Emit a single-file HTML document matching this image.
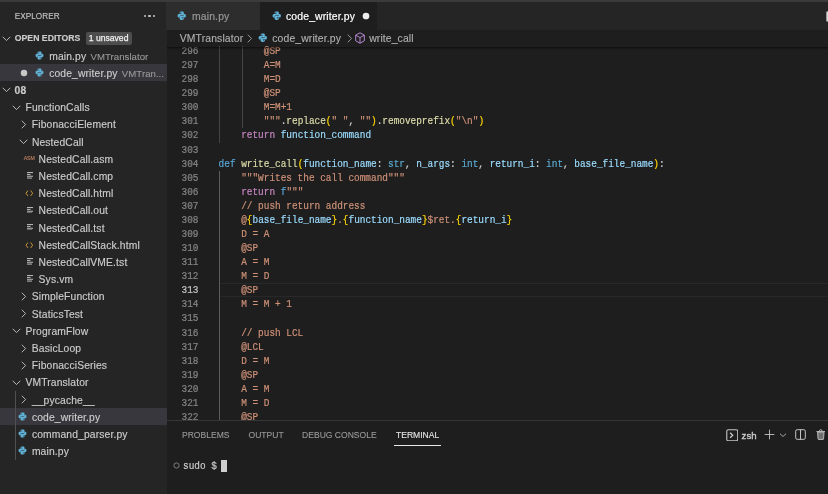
<!DOCTYPE html><html><head><meta charset="utf-8"><style>
*{margin:0;padding:0;box-sizing:border-box}
html,body{width:828px;height:494px;overflow:hidden;background:#1e1e1e}
body{position:relative;font-family:'Liberation Sans', sans-serif}
#root{position:absolute;left:0;top:0;width:828px;height:494px;will-change:transform}
#top{position:absolute;left:0;top:0;width:828px;height:2.4px;background:#3b3b3b;z-index:5}
#sb{position:absolute;left:0;top:0;width:166.5px;height:494px;background:#252526}
#tabs{position:absolute;left:166.5px;top:0;width:661.5px;height:30px;background:#252526}
#bc{position:absolute;left:166.5px;top:30px;width:661.5px;height:16px;background:#1e1e1e}
#bc>*{}
.t{position:absolute;white-space:pre;font-family:'Liberation Sans', sans-serif}
.hdr{font-size:8.2px;letter-spacing:0.05px;color:#c4c4c4;line-height:10px;-webkit-text-stroke:0.12px currentColor}
.hdrb{font-size:8.7px;font-weight:bold;color:#cccccc;line-height:17.2px;-webkit-text-stroke:0.15px currentColor}
.row{font-size:10.3px;letter-spacing:0.14px;color:#cccccc;line-height:17.2px;height:17.2px;padding-top:0.5px;-webkit-text-stroke:0.15px currentColor}
.desc{-webkit-text-stroke:0.1px currentColor}
.row.b{font-weight:bold}
.desc{color:#9a9a9a;font-size:9.6px;letter-spacing:0.05px;margin-left:1.3px}
.badge{position:absolute;background:#4d4d4d;border-radius:2px;color:#f0f0f0;font-size:8.6px;line-height:13px;text-align:center;font-family:'Liberation Sans', sans-serif;letter-spacing:0px;-webkit-text-stroke:0.25px currentColor}
.sel{position:absolute;left:0;width:166.5px;height:17.2px;background:#37373d}
.dot{position:absolute;width:7.2px;height:7.2px;border-radius:50%;background:#d0d0d0}
.dots{position:absolute;display:flex;gap:2.2px}
.dots i{display:block;width:2.3px;height:2.3px;border-radius:50%;background:#c5c5c5}
.asm{position:absolute;font-size:5.2px;color:#c08060;-webkit-text-stroke:0.12px currentColor;font-family:'Liberation Sans', sans-serif;letter-spacing:-0.1px;line-height:5px}
.lines{position:absolute;width:7px}
.lines i{display:block;height:1.1px;background:#c8c8c8;margin-bottom:0.9px}
.tab{position:absolute;top:2.2px;height:27.8px}
.tabt{top:3.2px;line-height:27.8px;font-size:10.4px;letter-spacing:0.15px;-webkit-text-stroke:0.2px currentColor}
.bct{top:31px;line-height:16px;font-size:10.4px;letter-spacing:0.12px;color:#b0b0b0;-webkit-text-stroke:0.12px currentColor}
#ed{position:absolute;left:166.5px;top:46px;width:661.5px;height:374px;overflow:hidden;background:#1e1e1e}
#shadow{position:absolute;left:166.5px;top:46.6px;width:661.5px;height:3px;background:linear-gradient(rgba(0,0,0,0.5),rgba(0,0,0,0.28) 35%,rgba(0,0,0,0))}
.ln{position:absolute;left:0;width:32px;text-align:right;font-family:'Liberation Mono', monospace;font-size:9.42px;line-height:14.08px;height:14.08px;padding-top:1.3px;-webkit-text-stroke:0.2px currentColor;transform:scaleY(1.14);transform-origin:0 10.85px}
.code{position:absolute;left:52.10px;white-space:pre;font-family:'Liberation Mono', monospace;font-size:9.42px;line-height:14.08px;height:14.08px;-webkit-text-stroke:0.18px currentColor;padding-top:0.7px;transform:scaleY(1.14);transform-origin:0 10.25px}
.cur{position:absolute;left:52px;width:610px;height:14.08px;border-top:1.5px solid #282828;border-bottom:1.5px solid #282828}
.ig{position:absolute;width:1px}
#panel{position:absolute;left:166.5px;top:420px;width:661.5px;height:74px;background:#1e1e1e;border-top:1.8px solid #363636}
#panel .t,#panel svg,#panel div{}
.ptab{top:427px;line-height:17px;font-size:8.55px;letter-spacing:0px;-webkit-text-stroke:0.1px currentColor}
.term{position:absolute;font-family:'Liberation Mono', monospace;font-size:9.42px;line-height:14px;color:#cccccc;white-space:pre;-webkit-text-stroke:0.18px currentColor;transform:scaleY(1.14);transform-origin:0 10.5px}
</style></head><body>
<div id="root">
<div id="top"></div>
<div id="sb">
<div class="t hdr" style="left:14.7px;top:12.2px">EXPLORER</div>
<div class="dots" style="left:144px;top:15px"><i></i><i></i><i></i></div>
<svg viewBox="0 0 16 16" width="11" height="11" style="position:absolute;left:1px;top:33.400000000000006px"><path d="M2.5 5.5L8 11L13.5 5.5" fill="none" stroke="#c5c5c5" stroke-width="1.35"/></svg>
<div class="t hdrb" style="left:14.8px;top:29.9px">OPEN EDITORS</div>
<div class="badge" style="left:85.6px;top:31.6px;width:46px;height:13px">1 unsaved</div>
<svg viewBox="0 0 16 16" width="9" height="9" style="position:absolute;left:35px;top:51.0px"><path fill="#60b2d6" fill-rule="evenodd" d="M4.3 3.2Q4.3 1 7.2 1H9.3Q11.6 1 11.6 3.2V6.3Q11.6 7.6 10.3 7.6H6.4Q4.6 7.6 4.6 9.4V10.9H3.1Q1 10.9 1 8.3V7.6Q1 5 3.3 5H8V4.4H4.3ZM6.3 2.2A.75.75 0 1 0 6.3 3.7.75.75 0 1 0 6.3 2.2Z"/><path fill="#60b2d6" fill-rule="evenodd" d="M11.7 12.8Q11.7 15 8.8 15H6.7Q4.4 15 4.4 12.8V9.7Q4.4 8.4 5.7 8.4H9.6Q11.4 8.4 11.4 6.6V5.1H12.9Q15 5.1 15 7.7V8.4Q15 11 12.7 11H8V11.6H11.7ZM9.7 13.8A.75.75 0 1 0 9.7 12.3.75.75 0 1 0 9.7 13.8Z"/></svg>
<div class="t row" style="left:49.2px;top:47.1px">main.py <span class="desc">VMTranslator</span></div>
<div class="sel" style="top:64.3px"></div>
<svg width="10" height="10" viewBox="0 0 10 10" style="position:absolute;left:18.95px;top:67.75px"><circle cx="5" cy="5" r="3.25" fill="#c8c8c8"/></svg>
<svg viewBox="0 0 16 16" width="9" height="9" style="position:absolute;left:35px;top:67.5px"><path fill="#60b2d6" fill-rule="evenodd" d="M4.3 3.2Q4.3 1 7.2 1H9.3Q11.6 1 11.6 3.2V6.3Q11.6 7.6 10.3 7.6H6.4Q4.6 7.6 4.6 9.4V10.9H3.1Q1 10.9 1 8.3V7.6Q1 5 3.3 5H8V4.4H4.3ZM6.3 2.2A.75.75 0 1 0 6.3 3.7.75.75 0 1 0 6.3 2.2Z"/><path fill="#60b2d6" fill-rule="evenodd" d="M11.7 12.8Q11.7 15 8.8 15H6.7Q4.4 15 4.4 12.8V9.7Q4.4 8.4 5.7 8.4H9.6Q11.4 8.4 11.4 6.6V5.1H12.9Q15 5.1 15 7.7V8.4Q15 11 12.7 11H8V11.6H11.7ZM9.7 13.8A.75.75 0 1 0 9.7 12.3.75.75 0 1 0 9.7 13.8Z"/></svg>
<div class="t row" style="left:49.2px;top:64.3px">code_writer.py <span class="desc">VMTran...</span></div>
<svg viewBox="0 0 16 16" width="11" height="11" style="position:absolute;left:1.2px;top:84.4px"><path d="M2.5 5.5L8 11L13.5 5.5" fill="none" stroke="#c5c5c5" stroke-width="1.35"/></svg>
<div class="t row b" style="left:14.6px;top:81.5px">08</div>
<svg viewBox="0 0 16 16" width="11" height="11" style="position:absolute;left:10.7px;top:101.60000000000001px"><path d="M2.5 5.5L8 11L13.5 5.5" fill="none" stroke="#c5c5c5" stroke-width="1.35"/></svg>
<div class="t row" style="left:25.5px;top:98.7px">FunctionCalls</div>
<svg viewBox="0 0 16 16" width="11" height="11" style="position:absolute;left:17.5px;top:119.0px"><path d="M5.5 2.5L11 8L5.5 13.5" fill="none" stroke="#c5c5c5" stroke-width="1.35"/></svg>
<div class="t row" style="left:31.8px;top:115.9px">FibonacciElement</div>
<svg viewBox="0 0 16 16" width="11" height="11" style="position:absolute;left:18.2px;top:136.0px"><path d="M2.5 5.5L8 11L13.5 5.5" fill="none" stroke="#c5c5c5" stroke-width="1.35"/></svg>
<div class="t row" style="left:31.9px;top:133.1px">NestedCall</div>
<div class="asm" style="left:23.7px;top:155.8px">ASM</div>
<div class="t row" style="left:38.6px;top:150.3px">NestedCall.asm</div>
<svg viewBox="0 0 14 14" width="6.6" height="6.6" style="position:absolute;left:26.8px;top:172.2px"><path d="M0 1.2H13.5M0 5.1H7.5M0 9H13.5M0 12.9H10.5" stroke="#c8c8c8" stroke-width="2"/></svg>
<div class="t row" style="left:38.6px;top:167.5px">NestedCall.cmp</div>
<svg viewBox="0 0 16 12" width="8.6" height="6.45" style="position:absolute;left:24.8px;top:190.3px"><path d="M5.4 1L1.8 6L5.4 11M10.6 1L14.2 6L10.6 11" fill="none" stroke="#dca23c" stroke-width="1.7"/></svg>
<div class="t row" style="left:38.6px;top:184.7px">NestedCall.html</div>
<svg viewBox="0 0 14 14" width="6.6" height="6.6" style="position:absolute;left:26.8px;top:206.6px"><path d="M0 1.2H13.5M0 5.1H7.5M0 9H13.5M0 12.9H10.5" stroke="#c8c8c8" stroke-width="2"/></svg>
<div class="t row" style="left:38.6px;top:201.9px">NestedCall.out</div>
<svg viewBox="0 0 14 14" width="6.6" height="6.6" style="position:absolute;left:26.8px;top:223.8px"><path d="M0 1.2H13.5M0 5.1H7.5M0 9H13.5M0 12.9H10.5" stroke="#c8c8c8" stroke-width="2"/></svg>
<div class="t row" style="left:38.6px;top:219.1px">NestedCall.tst</div>
<svg viewBox="0 0 16 12" width="8.6" height="6.45" style="position:absolute;left:24.8px;top:241.9px"><path d="M5.4 1L1.8 6L5.4 11M10.6 1L14.2 6L10.6 11" fill="none" stroke="#dca23c" stroke-width="1.7"/></svg>
<div class="t row" style="left:38.6px;top:236.3px">NestedCallStack.html</div>
<svg viewBox="0 0 14 14" width="6.6" height="6.6" style="position:absolute;left:26.8px;top:258.2px"><path d="M0 1.2H13.5M0 5.1H7.5M0 9H13.5M0 12.9H10.5" stroke="#c8c8c8" stroke-width="2"/></svg>
<div class="t row" style="left:38.6px;top:253.5px">NestedCallVME.tst</div>
<svg viewBox="0 0 14 14" width="6.6" height="6.6" style="position:absolute;left:26.8px;top:275.4px"><path d="M0 1.2H13.5M0 5.1H7.5M0 9H13.5M0 12.9H10.5" stroke="#c8c8c8" stroke-width="2"/></svg>
<div class="t row" style="left:38.6px;top:270.7px">Sys.vm</div>
<svg viewBox="0 0 16 16" width="11" height="11" style="position:absolute;left:17.5px;top:291.0px"><path d="M5.5 2.5L11 8L5.5 13.5" fill="none" stroke="#c5c5c5" stroke-width="1.35"/></svg>
<div class="t row" style="left:31.8px;top:287.9px">SimpleFunction</div>
<svg viewBox="0 0 16 16" width="11" height="11" style="position:absolute;left:17.5px;top:308.20000000000005px"><path d="M5.5 2.5L11 8L5.5 13.5" fill="none" stroke="#c5c5c5" stroke-width="1.35"/></svg>
<div class="t row" style="left:31.8px;top:305.1px">StaticsTest</div>
<svg viewBox="0 0 16 16" width="11" height="11" style="position:absolute;left:10.7px;top:325.19999999999993px"><path d="M2.5 5.5L8 11L13.5 5.5" fill="none" stroke="#c5c5c5" stroke-width="1.35"/></svg>
<div class="t row" style="left:25.5px;top:322.3px">ProgramFlow</div>
<svg viewBox="0 0 16 16" width="11" height="11" style="position:absolute;left:17.5px;top:342.6px"><path d="M5.5 2.5L11 8L5.5 13.5" fill="none" stroke="#c5c5c5" stroke-width="1.35"/></svg>
<div class="t row" style="left:31.8px;top:339.5px">BasicLoop</div>
<svg viewBox="0 0 16 16" width="11" height="11" style="position:absolute;left:17.5px;top:359.8px"><path d="M5.5 2.5L11 8L5.5 13.5" fill="none" stroke="#c5c5c5" stroke-width="1.35"/></svg>
<div class="t row" style="left:31.8px;top:356.7px">FibonacciSeries</div>
<svg viewBox="0 0 16 16" width="11" height="11" style="position:absolute;left:10.7px;top:376.79999999999995px"><path d="M2.5 5.5L8 11L13.5 5.5" fill="none" stroke="#c5c5c5" stroke-width="1.35"/></svg>
<div class="t row" style="left:25.5px;top:373.9px">VMTranslator</div>
<svg viewBox="0 0 16 16" width="11" height="11" style="position:absolute;left:17.5px;top:394.2px"><path d="M5.5 2.5L11 8L5.5 13.5" fill="none" stroke="#c5c5c5" stroke-width="1.35"/></svg>
<div class="t row" style="left:31.9px;top:391.1px">__pycache__</div>
<div class="sel" style="top:408.3px"></div>
<svg viewBox="0 0 16 16" width="9" height="9" style="position:absolute;left:17.8px;top:411.90000000000003px"><path fill="#60b2d6" fill-rule="evenodd" d="M4.3 3.2Q4.3 1 7.2 1H9.3Q11.6 1 11.6 3.2V6.3Q11.6 7.6 10.3 7.6H6.4Q4.6 7.6 4.6 9.4V10.9H3.1Q1 10.9 1 8.3V7.6Q1 5 3.3 5H8V4.4H4.3ZM6.3 2.2A.75.75 0 1 0 6.3 3.7.75.75 0 1 0 6.3 2.2Z"/><path fill="#60b2d6" fill-rule="evenodd" d="M11.7 12.8Q11.7 15 8.8 15H6.7Q4.4 15 4.4 12.8V9.7Q4.4 8.4 5.7 8.4H9.6Q11.4 8.4 11.4 6.6V5.1H12.9Q15 5.1 15 7.7V8.4Q15 11 12.7 11H8V11.6H11.7ZM9.7 13.8A.75.75 0 1 0 9.7 12.3.75.75 0 1 0 9.7 13.8Z"/></svg>
<div class="t row" style="left:31.9px;top:408.3px">code_writer.py</div>
<svg viewBox="0 0 16 16" width="9" height="9" style="position:absolute;left:17.8px;top:429.1px"><path fill="#60b2d6" fill-rule="evenodd" d="M4.3 3.2Q4.3 1 7.2 1H9.3Q11.6 1 11.6 3.2V6.3Q11.6 7.6 10.3 7.6H6.4Q4.6 7.6 4.6 9.4V10.9H3.1Q1 10.9 1 8.3V7.6Q1 5 3.3 5H8V4.4H4.3ZM6.3 2.2A.75.75 0 1 0 6.3 3.7.75.75 0 1 0 6.3 2.2Z"/><path fill="#60b2d6" fill-rule="evenodd" d="M11.7 12.8Q11.7 15 8.8 15H6.7Q4.4 15 4.4 12.8V9.7Q4.4 8.4 5.7 8.4H9.6Q11.4 8.4 11.4 6.6V5.1H12.9Q15 5.1 15 7.7V8.4Q15 11 12.7 11H8V11.6H11.7ZM9.7 13.8A.75.75 0 1 0 9.7 12.3.75.75 0 1 0 9.7 13.8Z"/></svg>
<div class="t row" style="left:31.9px;top:425.5px">command_parser.py</div>
<svg viewBox="0 0 16 16" width="9" height="9" style="position:absolute;left:17.8px;top:446.3px"><path fill="#60b2d6" fill-rule="evenodd" d="M4.3 3.2Q4.3 1 7.2 1H9.3Q11.6 1 11.6 3.2V6.3Q11.6 7.6 10.3 7.6H6.4Q4.6 7.6 4.6 9.4V10.9H3.1Q1 10.9 1 8.3V7.6Q1 5 3.3 5H8V4.4H4.3ZM6.3 2.2A.75.75 0 1 0 6.3 3.7.75.75 0 1 0 6.3 2.2Z"/><path fill="#60b2d6" fill-rule="evenodd" d="M11.7 12.8Q11.7 15 8.8 15H6.7Q4.4 15 4.4 12.8V9.7Q4.4 8.4 5.7 8.4H9.6Q11.4 8.4 11.4 6.6V5.1H12.9Q15 5.1 15 7.7V8.4Q15 11 12.7 11H8V11.6H11.7ZM9.7 13.8A.75.75 0 1 0 9.7 12.3.75.75 0 1 0 9.7 13.8Z"/></svg>
<div class="t row" style="left:31.9px;top:442.7px">main.py</div>
<div style="position:absolute;left:14.6px;top:391.1px;width:0.8px;height:68.8px;background:#505050"></div>
</div>
<div id="tabs"></div>
<div class="tab" style="left:166px;width:94.3px;background:#2d2d2d"></div>
<svg viewBox="0 0 16 16" width="9.5" height="9.5" style="position:absolute;left:177.3px;top:11.2px"><path fill="#60b2d6" fill-rule="evenodd" d="M4.3 3.2Q4.3 1 7.2 1H9.3Q11.6 1 11.6 3.2V6.3Q11.6 7.6 10.3 7.6H6.4Q4.6 7.6 4.6 9.4V10.9H3.1Q1 10.9 1 8.3V7.6Q1 5 3.3 5H8V4.4H4.3ZM6.3 2.2A.75.75 0 1 0 6.3 3.7.75.75 0 1 0 6.3 2.2Z"/><path fill="#60b2d6" fill-rule="evenodd" d="M11.7 12.8Q11.7 15 8.8 15H6.7Q4.4 15 4.4 12.8V9.7Q4.4 8.4 5.7 8.4H9.6Q11.4 8.4 11.4 6.6V5.1H12.9Q15 5.1 15 7.7V8.4Q15 11 12.7 11H8V11.6H11.7ZM9.7 13.8A.75.75 0 1 0 9.7 12.3.75.75 0 1 0 9.7 13.8Z"/></svg>
<div class="t tabt" style="left:192px;color:#969696">main.py</div>
<div class="tab" style="left:260.3px;width:117px;background:#1e1e1e"></div>
<svg viewBox="0 0 16 16" width="9.5" height="9.5" style="position:absolute;left:271.6px;top:11.2px"><path fill="#60b2d6" fill-rule="evenodd" d="M4.3 3.2Q4.3 1 7.2 1H9.3Q11.6 1 11.6 3.2V6.3Q11.6 7.6 10.3 7.6H6.4Q4.6 7.6 4.6 9.4V10.9H3.1Q1 10.9 1 8.3V7.6Q1 5 3.3 5H8V4.4H4.3ZM6.3 2.2A.75.75 0 1 0 6.3 3.7.75.75 0 1 0 6.3 2.2Z"/><path fill="#60b2d6" fill-rule="evenodd" d="M11.7 12.8Q11.7 15 8.8 15H6.7Q4.4 15 4.4 12.8V9.7Q4.4 8.4 5.7 8.4H9.6Q11.4 8.4 11.4 6.6V5.1H12.9Q15 5.1 15 7.7V8.4Q15 11 12.7 11H8V11.6H11.7ZM9.7 13.8A.75.75 0 1 0 9.7 12.3.75.75 0 1 0 9.7 13.8Z"/></svg>
<div class="t tabt" style="left:286px;color:#ffffff">code_writer.py</div>
<svg width="10" height="10" viewBox="0 0 10 10" style="position:absolute;left:361.1px;top:10.9px"><circle cx="5" cy="5" r="3.35" fill="#eeeeee"/></svg>
<div style="position:absolute;left:826.4px;top:10.6px;width:4px;height:11px;border-radius:1.5px;background:#d8d8d8;border:0.8px solid #9a9a9a"></div>
<div id="bc"></div>
<div class="t bct" style="left:179.8px">VMTranslator</div>
<svg viewBox="0 0 16 16" width="11" height="11" style="position:absolute;left:243.5px;top:33.2px"><path d="M5.5 2.5L11 8L5.5 13.5" fill="none" stroke="#a0a0a0" stroke-width="1.35"/></svg>
<svg viewBox="0 0 16 16" width="9.5" height="9.5" style="position:absolute;left:258.2px;top:33.1px"><path fill="#60b2d6" fill-rule="evenodd" d="M4.3 3.2Q4.3 1 7.2 1H9.3Q11.6 1 11.6 3.2V6.3Q11.6 7.6 10.3 7.6H6.4Q4.6 7.6 4.6 9.4V10.9H3.1Q1 10.9 1 8.3V7.6Q1 5 3.3 5H8V4.4H4.3ZM6.3 2.2A.75.75 0 1 0 6.3 3.7.75.75 0 1 0 6.3 2.2Z"/><path fill="#60b2d6" fill-rule="evenodd" d="M11.7 12.8Q11.7 15 8.8 15H6.7Q4.4 15 4.4 12.8V9.7Q4.4 8.4 5.7 8.4H9.6Q11.4 8.4 11.4 6.6V5.1H12.9Q15 5.1 15 7.7V8.4Q15 11 12.7 11H8V11.6H11.7ZM9.7 13.8A.75.75 0 1 0 9.7 12.3.75.75 0 1 0 9.7 13.8Z"/></svg>
<div class="t bct" style="left:272.3px">code_writer.py</div>
<svg viewBox="0 0 16 16" width="11" height="11" style="position:absolute;left:344px;top:33.2px"><path d="M5.5 2.5L11 8L5.5 13.5" fill="none" stroke="#a0a0a0" stroke-width="1.35"/></svg>
<svg viewBox="0 0 10 12" width="10" height="12" style="position:absolute;left:355.2px;top:31.8px"><path d="M5 0.8L9.3 3.2V8.8L5 11.2L0.7 8.8V3.2Z M0.7 3.2L5 5.6L9.3 3.2 M5 5.6V11.2" fill="none" stroke="#b586d0" stroke-width="1.0" stroke-linejoin="round"/></svg>
<div class="t bct" style="left:369.2px">write_call</div>
<div id="ed">
<div class="cur" style="top:237.30px"></div>
<div class="ig" style="left:52.70px;top:-2.06px;height:98.56px;background:#454545"></div>
<div class="ig" style="left:75.32px;top:-2.06px;height:84.48px;background:#454545"></div>
<div class="ig" style="left:52.70px;top:124.66px;height:253.44px;background:#5c5c5c"></div>
<div class="ln" style="top:-2.06px;color:#858585">296</div>
<div class="code" style="top:-2.06px"><span style="color:#ce9178">        @SP</span></div>
<div class="ln" style="top:12.02px;color:#858585">297</div>
<div class="code" style="top:12.02px"><span style="color:#ce9178">        A=M</span></div>
<div class="ln" style="top:26.10px;color:#858585">298</div>
<div class="code" style="top:26.10px"><span style="color:#ce9178">        M=D</span></div>
<div class="ln" style="top:40.18px;color:#858585">299</div>
<div class="code" style="top:40.18px"><span style="color:#ce9178">        @SP</span></div>
<div class="ln" style="top:54.26px;color:#858585">300</div>
<div class="code" style="top:54.26px"><span style="color:#ce9178">        M=M+1</span></div>
<div class="ln" style="top:68.34px;color:#858585">301</div>
<div class="code" style="top:68.34px"><span style="color:#ce9178">        """</span><span style="color:#d4d4d4">.</span><span style="color:#dcdcaa">replace</span><span style="color:#ffd700">(</span><span style="color:#ce9178">" "</span><span style="color:#d4d4d4">, </span><span style="color:#ce9178">""</span><span style="color:#ffd700">)</span><span style="color:#d4d4d4">.</span><span style="color:#dcdcaa">removeprefix</span><span style="color:#ffd700">(</span><span style="color:#ce9178">"</span><span style="color:#ce9178">\n</span><span style="color:#ce9178">"</span><span style="color:#ffd700">)</span></div>
<div class="ln" style="top:82.42px;color:#858585">302</div>
<div class="code" style="top:82.42px"><span style="color:#d4d4d4">    </span><span style="color:#c586c0">return</span><span style="color:#d4d4d4"> </span><span style="color:#9cdcfe">function_command</span></div>
<div class="ln" style="top:96.50px;color:#858585">303</div>
<div class="code" style="top:96.50px"></div>
<div class="ln" style="top:110.58px;color:#858585">304</div>
<div class="code" style="top:110.58px"><span style="color:#58a6d6">def</span><span style="color:#d4d4d4"> </span><span style="color:#dcdcaa">write_call</span><span style="color:#ffd700">(</span><span style="color:#9cdcfe">function_name</span><span style="color:#d4d4d4">: </span><span style="color:#5aaad0">str</span><span style="color:#d4d4d4">, </span><span style="color:#9cdcfe">n_args</span><span style="color:#d4d4d4">: </span><span style="color:#5aaad0">int</span><span style="color:#d4d4d4">, </span><span style="color:#9cdcfe">return_i</span><span style="color:#d4d4d4">: </span><span style="color:#5aaad0">int</span><span style="color:#d4d4d4">, </span><span style="color:#9cdcfe">base_file_name</span><span style="color:#ffd700">)</span><span style="color:#d4d4d4">:</span></div>
<div class="ln" style="top:124.66px;color:#858585">305</div>
<div class="code" style="top:124.66px"><span style="color:#ce9178">    """Writes the call command"""</span></div>
<div class="ln" style="top:138.74px;color:#858585">306</div>
<div class="code" style="top:138.74px"><span style="color:#d4d4d4">    </span><span style="color:#c586c0">return</span><span style="color:#d4d4d4"> </span><span style="color:#58a6d6">f</span><span style="color:#ce9178">"""</span></div>
<div class="ln" style="top:152.82px;color:#858585">307</div>
<div class="code" style="top:152.82px"><span style="color:#ce9178">    // push return address</span></div>
<div class="ln" style="top:166.90px;color:#858585">308</div>
<div class="code" style="top:166.90px"><span style="color:#ce9178">    @</span><span style="color:#ffd700">{</span><span style="color:#9cdcfe">base_file_name</span><span style="color:#ffd700">}</span><span style="color:#ce9178">.</span><span style="color:#ffd700">{</span><span style="color:#9cdcfe">function_name</span><span style="color:#ffd700">}</span><span style="color:#ce9178">$ret.</span><span style="color:#ffd700">{</span><span style="color:#9cdcfe">return_i</span><span style="color:#ffd700">}</span></div>
<div class="ln" style="top:180.98px;color:#858585">309</div>
<div class="code" style="top:180.98px"><span style="color:#ce9178">    D = A</span></div>
<div class="ln" style="top:195.06px;color:#858585">310</div>
<div class="code" style="top:195.06px"><span style="color:#ce9178">    @SP</span></div>
<div class="ln" style="top:209.14px;color:#858585">311</div>
<div class="code" style="top:209.14px"><span style="color:#ce9178">    A = M</span></div>
<div class="ln" style="top:223.22px;color:#858585">312</div>
<div class="code" style="top:223.22px"><span style="color:#ce9178">    M = D</span></div>
<div class="ln" style="top:237.30px;color:#c6c6c6">313</div>
<div class="code" style="top:237.30px"><span style="color:#ce9178">    @SP</span></div>
<div class="ln" style="top:251.38px;color:#858585">314</div>
<div class="code" style="top:251.38px"><span style="color:#ce9178">    M = M + 1</span></div>
<div class="ln" style="top:265.46px;color:#858585">315</div>
<div class="code" style="top:265.46px"></div>
<div class="ln" style="top:279.54px;color:#858585">316</div>
<div class="code" style="top:279.54px"><span style="color:#ce9178">    // push LCL</span></div>
<div class="ln" style="top:293.62px;color:#858585">317</div>
<div class="code" style="top:293.62px"><span style="color:#ce9178">    @LCL</span></div>
<div class="ln" style="top:307.70px;color:#858585">318</div>
<div class="code" style="top:307.70px"><span style="color:#ce9178">    D = M</span></div>
<div class="ln" style="top:321.78px;color:#858585">319</div>
<div class="code" style="top:321.78px"><span style="color:#ce9178">    @SP</span></div>
<div class="ln" style="top:335.86px;color:#858585">320</div>
<div class="code" style="top:335.86px"><span style="color:#ce9178">    A = M</span></div>
<div class="ln" style="top:349.94px;color:#858585">321</div>
<div class="code" style="top:349.94px"><span style="color:#ce9178">    M = D</span></div>
<div class="ln" style="top:364.02px;color:#858585">322</div>
<div class="code" style="top:364.02px"><span style="color:#ce9178">    @SP</span></div>
</div>
<div id="shadow"></div>
<div id="panel"></div>
<div class="t ptab" style="left:182.0px;color:#9a9a9a">PROBLEMS</div>
<div class="t ptab" style="left:248.5px;color:#9a9a9a">OUTPUT</div>
<div class="t ptab" style="left:302.1px;color:#9a9a9a">DEBUG CONSOLE</div>
<div class="t ptab" style="left:396.0px;color:#e7e7e7">TERMINAL</div>
<div style="position:absolute;left:394.2px;top:444.6px;width:46.8px;height:1.5px;background:#e7e7e7"></div>
<svg viewBox="0 0 16 16" width="12.5" height="12.5" style="position:absolute;left:725.8px;top:428.6px"><rect x="1" y="1" width="14" height="14" rx="1.8" fill="none" stroke="#c5c5c5" stroke-width="1.4"/><path d="M5.3 4.8L8.6 8L5.3 11.2" fill="none" stroke="#c5c5c5" stroke-width="1.7"/></svg>
<div class="t" style="left:741.6px;top:428.6px;font-size:9.6px;line-height:13px;color:#cccccc;-webkit-text-stroke:0.35px currentColor">zsh</div>
<svg viewBox="0 0 16 16" width="11" height="11" style="position:absolute;left:764.3px;top:429.2px"><path d="M8 1V15M1 8H15" fill="none" stroke="#c5c5c5" stroke-width="1.3"/></svg>
<svg viewBox="0 0 16 16" width="8" height="8" style="position:absolute;left:778.8px;top:431px"><path d="M2 5.5L8 11L14 5.5" fill="none" stroke="#c5c5c5" stroke-width="1.6"/></svg>
<svg viewBox="0 0 16 16" width="11" height="11" style="position:absolute;left:795.2px;top:428.8px"><rect x="1" y="1" width="14" height="14" rx="2.2" fill="none" stroke="#c5c5c5" stroke-width="1.45"/><path d="M8 1V15" stroke="#c5c5c5" stroke-width="1.45"/></svg>
<svg viewBox="0 0 14 16" width="9.6" height="11" style="position:absolute;left:815.6px;top:429px"><path d="M2.2 4.6H11.8L11 14.6Q10.9 15.3 10.2 15.3H3.8Q3.1 15.3 3 14.6Z" fill="#7a7a7a" stroke="#c5c5c5" stroke-width="1.2"/><path d="M0.6 3.6H13.4M4.8 3.4Q5 1 7 1Q9 1 9.2 3.4" fill="none" stroke="#c5c5c5" stroke-width="1.3"/><path d="M5.5 6.5V13.3M8.5 6.5V13.3" stroke="#555555" stroke-width="0.9"/></svg>
<svg viewBox="0 0 16 16" width="7" height="7" style="position:absolute;left:172.5px;top:462.3px"><circle cx="8" cy="8" r="6" fill="none" stroke="#8a8a8a" stroke-width="2"/></svg>
<div class="term" style="left:183px;top:459.5px">sudo $ </div>
<div style="position:absolute;left:221.2px;top:459.6px;width:5.8px;height:12.2px;background:#d0d0d0"></div>
</div>
</body></html>
